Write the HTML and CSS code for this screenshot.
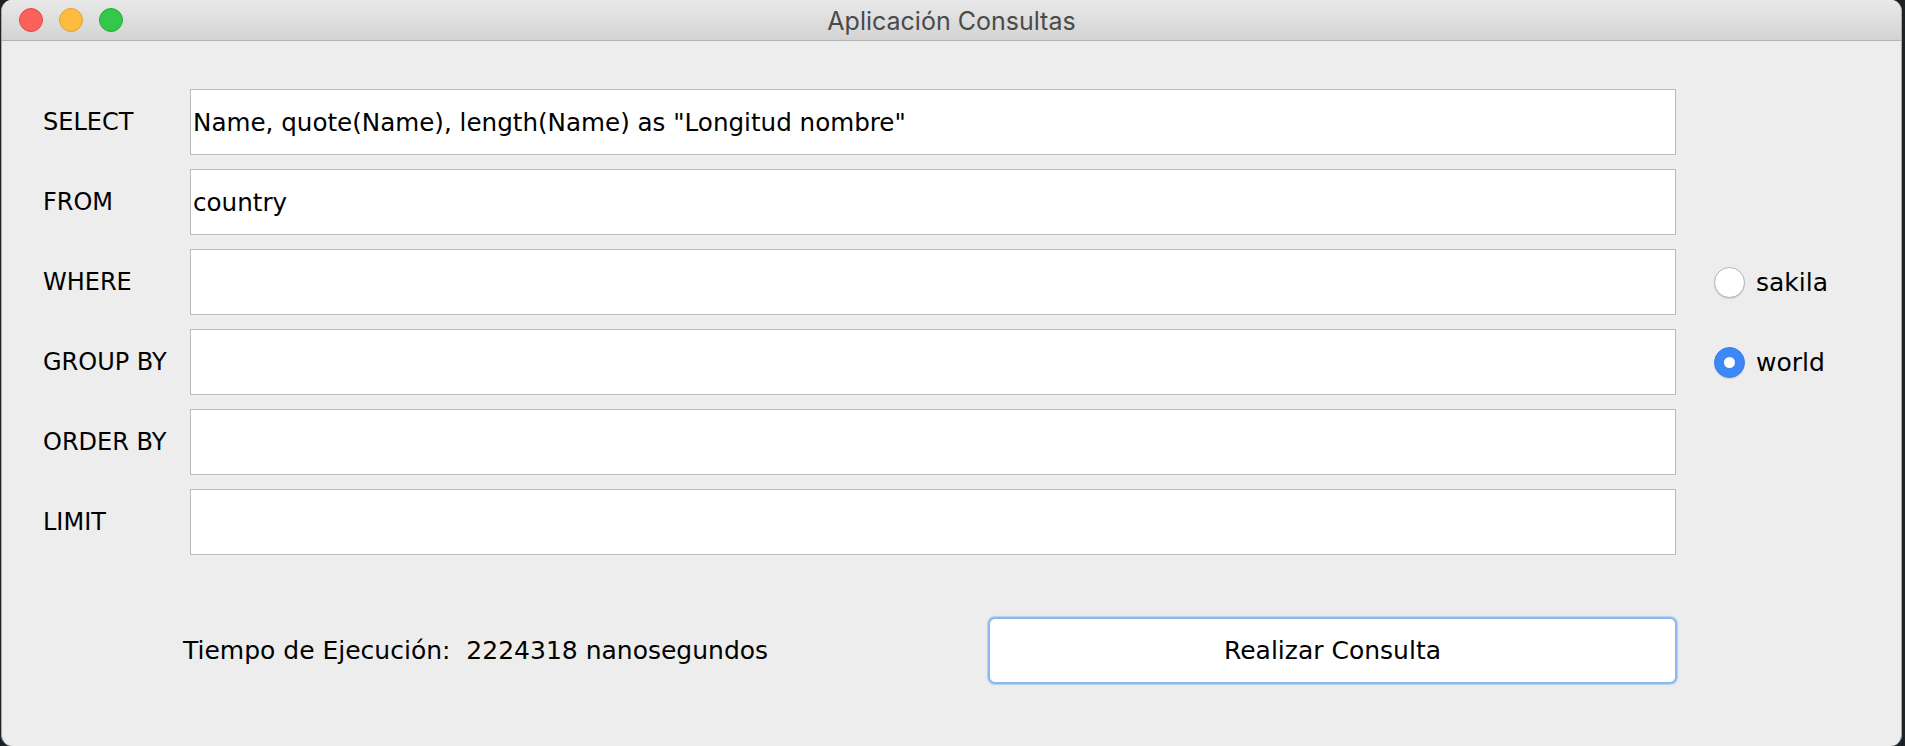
FILE: index.html
```html
<!DOCTYPE html>
<html lang="es">
<head>
<meta charset="utf-8">
<title>Aplicación Consultas</title>
<link rel="stylesheet" href="styles.css">
</head>
<body>
<div class="window">
  <div class="titlebar">
    <div class="lights">
      <span class="light red"></span>
      <span class="light yellow"></span>
      <span class="light green"></span>
    </div>
    <div class="title">Aplicación Consultas</div>
  </div>
  <div class="content">
    <div class="form">
      <div class="label">SELECT</div>
      <div class="field">Name, quote(Name), length(Name) as "Longitud nombre"</div>
      <div class="side"></div>

      <div class="label">FROM</div>
      <div class="field">country</div>
      <div class="side"></div>

      <div class="label">WHERE</div>
      <div class="field"></div>
      <div class="side"><span class="radio"></span><span class="rlabel">sakila</span></div>

      <div class="label">GROUP BY</div>
      <div class="field"></div>
      <div class="side"><span class="radio checked"></span><span class="rlabel">world</span></div>

      <div class="label">ORDER BY</div>
      <div class="field"></div>
      <div class="side"></div>

      <div class="label">LIMIT</div>
      <div class="field"></div>
      <div class="side"></div>
    </div>
    <div class="footer">
      <div class="time">Tiempo de Ejecución:&nbsp; 2224318 nanosegundos</div>
      <div class="button">Realizar Consulta</div>
    </div>
  </div>
</div>
</body>
</html>
```

FILE: styles.css
```css
html, body {
  margin: 0;
  padding: 0;
  height: 746px;
  overflow: hidden;
}
body {
  background: #1d2227;
  font-family: "DejaVu Sans", "Liberation Sans", sans-serif;
  color: #000;
}
.window {
  margin-left: 1px;
  width: 1899px;
  height: 746px;
  background: #ededed;
  border-left: 1px solid #a8a8a8;
  border-right: 1px solid #a8a8a8;
  border-radius: 11px;
  overflow: hidden;
}
.titlebar {
  height: 40px;
  border-bottom: 1px solid #b4b4b4;
  background: linear-gradient(#e9e9e9, #d3d3d3);
  display: flex;
  align-items: center;
  justify-content: center;
  position: relative;
}
.lights {
  position: absolute;
  left: 17px;
  top: 8px;
  display: flex;
  gap: 16px;
}
.light {
  width: 24px;
  height: 24px;
  border-radius: 50%;
  box-sizing: border-box;
}
.red { background: #fc605b; border: 1px solid #de4a44; }
.yellow { background: #fdbc40; border: 1px solid #dea236; }
.green { background: #34c84a; border: 1px solid #27aa35; }
.title {
  font-family: "Inter", "Liberation Sans", sans-serif;
  font-size: 25px;
  color: #4a4a4a;
  margin-top: 1px;
}
.content {
  padding: 48px 0 0 41px;
}
.form {
  display: grid;
  grid-template-columns: 147px 1486px auto;
  grid-auto-rows: 66px;
  row-gap: 14px;
}
.label {
  font-size: 24px;
  display: flex;
  align-items: center;
}
.field {
  background: #fff;
  border: 1px solid #bcbcbc;
  box-sizing: border-box;
  font-size: 24.6px;
  display: flex;
  align-items: center;
  padding-left: 2px;
  white-space: pre;
}
.side {
  display: flex;
  align-items: center;
  padding-left: 38px;
}
.radio {
  width: 31px;
  height: 31px;
  border-radius: 50%;
  box-sizing: border-box;
  background: #fff;
  border: 1px solid #b5b5b5;
  box-shadow: 0 1px 1px rgba(0,0,0,0.12);
  position: relative;
}
.radio.checked {
  background: #3b88f6;
  border: 1px solid #3a80ea;
}
.radio.checked::after {
  content: "";
  position: absolute;
  left: 50%;
  top: 50%;
  width: 11px;
  height: 11px;
  margin: -5.5px 0 0 -5.5px;
  border-radius: 50%;
  background: #fff;
}
.rlabel {
  font-size: 25px;
  margin-left: 11px;
}
.footer {
  display: flex;
  align-items: center;
  margin-top: 62px;
  padding-left: 140px;
}
.time {
  font-size: 25px;
  width: 805px;
  flex: none;
}
.button {
  flex: none;
  width: 689px;
  height: 67px;
  box-sizing: border-box;
  background: #fff;
  border: 2px solid #8bb9ef;
  box-shadow: 0 0 1px 1px rgba(120, 170, 235, 0.45);
  border-radius: 7px;
  display: flex;
  align-items: center;
  justify-content: center;
  font-size: 25px;
}
```
